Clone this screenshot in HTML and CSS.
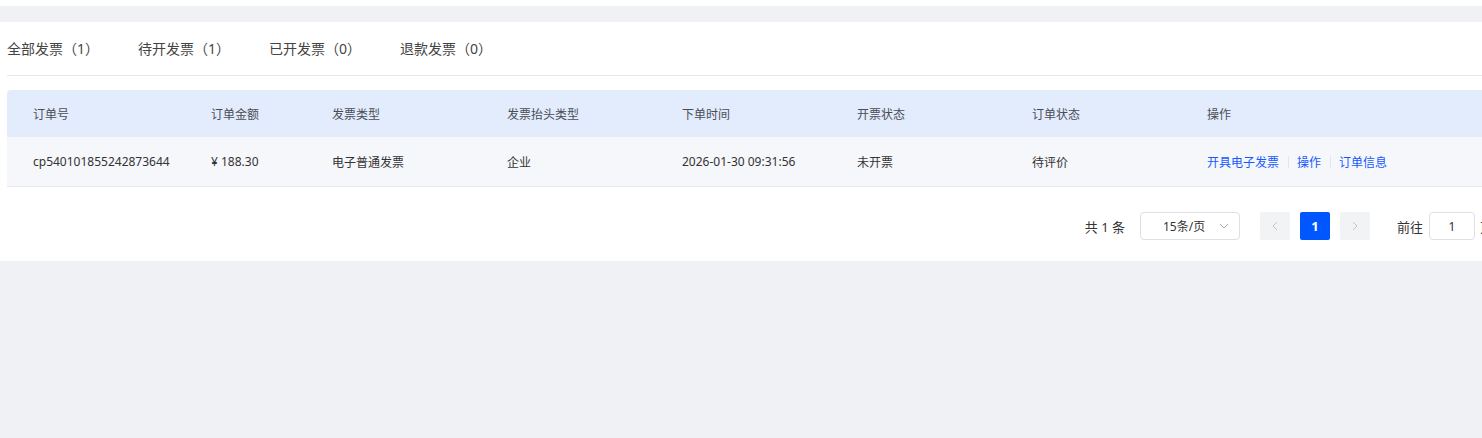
FILE: index.html
```html
<!DOCTYPE html>
<html lang="zh-CN">
<head>
<meta charset="utf-8">
<title>发票管理</title>
<link rel="stylesheet" href="styles.css">
</head>
<body>
<div class="page">
  <div class="top-strip"></div>
  <div class="gap-bar"></div>
  <div class="panel">
    <div class="tabs">
      <div class="tab">全部发票（1）</div>
      <div class="tab">待开发票（1）</div>
      <div class="tab">已开发票（0）</div>
      <div class="tab">退款发票（0）</div>
    </div>
    <div class="table">
      <div class="row head">
        <div class="cell">订单号</div>
        <div class="cell">订单金额</div>
        <div class="cell">发票类型</div>
        <div class="cell">发票抬头类型</div>
        <div class="cell">下单时间</div>
        <div class="cell">开票状态</div>
        <div class="cell">订单状态</div>
        <div class="cell">操作</div>
      </div>
      <div class="row body">
        <div class="cell">cp540101855242873644</div>
        <div class="cell">¥ 188.30</div>
        <div class="cell">电子普通发票</div>
        <div class="cell">企业</div>
        <div class="cell">2026-01-30 09:31:56</div>
        <div class="cell">未开票</div>
        <div class="cell">待评价</div>
        <div class="cell actions">
          <a class="link">开具电子发票</a><span class="sep"></span><a class="link">操作</a><span class="sep"></span><a class="link">订单信息</a>
        </div>
      </div>
    </div>
    <div class="pager">
      <span class="total">共 1 条</span>
      <div class="select">
        <span class="select-text">15条/页</span>
        <svg class="chev-down" width="10" height="6" viewBox="0 0 10 6"><path d="M1 1l4 4 4-4" fill="none" stroke="#a8abb2" stroke-width="1"/></svg>
      </div>
      <div class="pages">
        <button class="pbtn nav"><svg width="6" height="10" viewBox="0 0 6 10"><path d="M5 1L1 5l4 4" fill="none" stroke="#c0c4cc" stroke-width="1"/></svg></button>
        <button class="pbtn active">1</button>
        <button class="pbtn nav"><svg width="6" height="10" viewBox="0 0 6 10"><path d="M1 1l4 4-4 4" fill="none" stroke="#c0c4cc" stroke-width="1"/></svg></button>
      </div>
      <span class="goto">前往</span>
      <div class="jump">1</div>
      <span class="goto">页</span>
    </div>
  </div>
</div>
</body>
</html>
```
FILE: styles.css
```css
html, body {
  margin: 0;
  padding: 0;
  overflow: hidden;
}
body {
  background: #f0f1f5;
  font-family: "Noto Sans", "Noto Sans CJK SC", sans-serif;
  color: #333;
}
.page {
  width: 1513px;
  min-height: 438px;
  background: #f0f1f5;
}
.top-strip {
  height: 6px;
  background: #fff;
}
.gap-bar {
  height: 16px;
  background: #f0f1f5;
}
.panel {
  background: #fff;
  padding: 0 0 21px 7px;
}
.tabs {
  display: flex;
  gap: 39px;
  height: 53px;
  align-items: center;
  border-bottom: 1px solid #e4e6eb;
  margin-bottom: 14px;
}
.tab {
  font-size: 14px;
  color: #444;
  line-height: 20px;
  padding-top: 1px;
}
.table {
  font-size: 12px;
}
.row {
  display: grid;
  grid-template-columns: 178px 121px 175px 175px 175px 175px 175px 1fr;
  align-items: center;
}
.cell {
  padding-left: 26px;
  white-space: nowrap;
}
.row.head {
  height: 47px;
  background: #e3ecfd;
  border-radius: 4px 0 0 0;
  color: #4a4d55;
}
.row.body {
  height: 49px;
  background: #f6f7fb;
  border-bottom: 1px solid #e8eaee;
  color: #333;
}
.actions {
  display: flex;
  align-items: center;
}
.link {
  color: #1559ff;
  cursor: pointer;
}
.sep {
  width: 1px;
  height: 12px;
  background: #e2e6ef;
  margin: 0 8.5px;
}
.pager {
  display: flex;
  justify-content: flex-end;
  align-items: center;
  margin-top: 25px;
  padding-right: 20px;
  font-size: 13px;
  color: #333;
}
.total {
  margin-right: 15px;
}
.select {
  width: 100px;
  height: 28px;
  box-sizing: border-box;
  border: 1px solid #dcdfe6;
  border-radius: 4px;
  display: flex;
  align-items: center;
  padding: 0 10px 0 22px;
  justify-content: space-between;
  font-size: 12px;
}
.pages {
  display: flex;
  gap: 10px;
  margin-left: 20px;
  margin-right: 27px;
}
.pbtn {
  width: 30px;
  height: 28px;
  border: none;
  border-radius: 2px;
  padding: 0;
  display: flex;
  align-items: center;
  justify-content: center;
  font-family: inherit;
  font-size: 13px;
}
.pbtn.nav {
  background: #f2f3f5;
}
.pbtn.active {
  background: #0057ff;
  color: #fff;
  font-weight: 700;
}
.jump {
  width: 46px;
  height: 28px;
  box-sizing: border-box;
  border: 1px solid #dcdfe6;
  border-radius: 4px;
  margin: 0 5px 0 6px;
  display: flex;
  align-items: center;
  justify-content: center;
  font-size: 12px;
}
```
